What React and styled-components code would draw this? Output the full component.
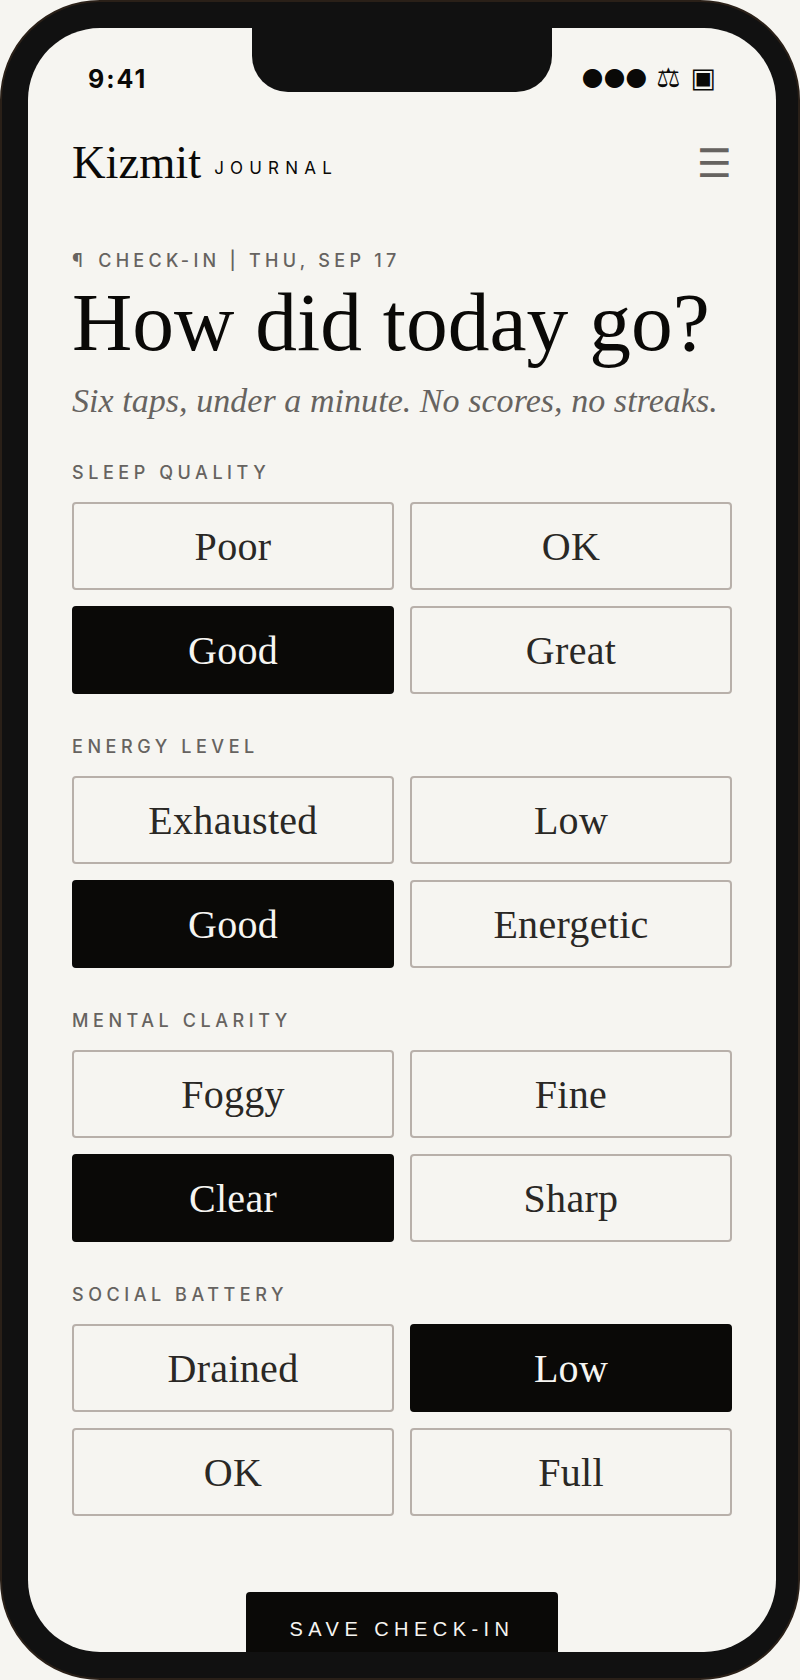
import React from 'react';
import styled, { createGlobalStyle } from 'styled-components';

const SERIF = "'Liberation Serif', 'Noto Serif', serif";
const SANS = "'Liberation Sans', Arial, sans-serif";
const WORK = "Inter, 'Liberation Sans', sans-serif";

const sections = [
  { label: 'Sleep quality', options: ['Poor', 'OK', 'Good', 'Great'], active: 'Good' },
  { label: 'Energy level', options: ['Exhausted', 'Low', 'Good', 'Energetic'], active: 'Good' },
  { label: 'Mental clarity', options: ['Foggy', 'Fine', 'Clear', 'Sharp'], active: 'Clear' },
  { label: 'Social battery', options: ['Drained', 'Low', 'OK', 'Full'], active: 'Low' },
];

const App = () => (
  <>
    <GlobalStyle />
    <Phone>
      <Screen>
        <Notch />
        <StatusBar>
          <Time>9:41</Time>
          <StatusIcons>
            <Dots>●●●</Dots>
            <Glyph>⚖</Glyph>
            <Glyph>▣</Glyph>
          </StatusIcons>
        </StatusBar>
        <Header>
          <Brand>
            <Logo>Kizmit</Logo>
            <LogoTag>Journal</LogoTag>
          </Brand>
          <Menu>☰</Menu>
        </Header>
        <Eyebrow>
          <Pilcrow>¶</Pilcrow> Check-in | Thu, Sep 17
        </Eyebrow>
        <Title>How did today go?</Title>
        <Tagline>Six taps, under a minute. No scores, no streaks.</Tagline>
        {sections.map((section) => (
          <Section key={section.label}>
            <SectionLabel>{section.label}</SectionLabel>
            <Options>
              {section.options.map((option) => (
                <Option key={option} $active={option === section.active}>
                  {option}
                </Option>
              ))}
            </Options>
          </Section>
        ))}
        <SaveButton>Save check-in</SaveButton>
      </Screen>
    </Phone>
  </>
);

export default App;

const GlobalStyle = createGlobalStyle`
  html, body {
    margin: 0;
    padding: 0;
    background: #f6f5f1;
  }
`;

const Phone = styled.div`
  width: 800px;
  height: 1680px;
  box-sizing: border-box;
  padding: 26px 22px 26px 26px;
  border: 2px solid #2a2018;
  border-radius: 100px;
  background: #111111;
  overflow: hidden;
`;

const Screen = styled.div`
  position: relative;
  height: 100%;
  box-sizing: border-box;
  padding: 0 44px;
  background: #f6f5f1;
  border-radius: 72px;
  overflow: hidden;
  color: #0a0907;
`;

const Notch = styled.div`
  position: absolute;
  top: 0;
  left: 224px;
  width: 300px;
  height: 64px;
  background: #111111;
  border-radius: 0 0 36px 36px;
`;

const StatusBar = styled.div`
  display: flex;
  justify-content: space-between;
  align-items: center;
  height: 102px;
  padding: 0 16px;
`;

const Time = styled.span`
  font-family: ${WORK};
  font-size: 25px;
  font-weight: 700;
  letter-spacing: 2px;
`;

const StatusIcons = styled.div`
  display: flex;
  align-items: center;
  gap: 10px;
  padding-bottom: 4px;
  font-family: 'DejaVu Sans', sans-serif;
  font-size: 27px;
`;

const Dots = styled.span`
  font-size: 25px;
  margin-bottom: 2px;
  margin-right: -1px;
`;

const Glyph = styled.span``;

const Header = styled.div`
  display: flex;
  justify-content: space-between;
  align-items: center;
  height: 60px;
  margin-top: 2px;
`;

const Brand = styled.div`
  display: flex;
  align-items: center;
  gap: 13px;
`;

const Logo = styled.span`
  font-family: ${SERIF};
  font-size: 46.5px;
`;

const LogoTag = styled.span`
  margin-top: 12px;
  font-family: ${WORK};
  font-size: 17px;
  letter-spacing: 6.2px;
  text-transform: uppercase;
`;

const Menu = styled.span`
  margin-top: 2px;
  font-family: 'DejaVu Sans', sans-serif;
  font-size: 39px;
  color: #666360;
`;

const Eyebrow = styled.div`
  margin-top: 58px;
  font-family: ${WORK};
  font-size: 18px;
  font-weight: 500;
  letter-spacing: 4.27px;
  text-transform: uppercase;
  color: #666360;
`;

const Pilcrow = styled.span`
  margin-right: 2px;
`;

const Title = styled.h1`
  margin: 7px 0 0;
  font-family: ${SERIF};
  font-size: 83.5px;
  font-weight: 400;
  line-height: 88px;
  white-space: nowrap;
`;

const Tagline = styled.p`
  margin: 16px 0 0;
  font-family: ${SERIF};
  font-size: 34px;
  font-style: italic;
  letter-spacing: 0.05px;
  color: #666360;
  white-space: nowrap;
`;

const Section = styled.section`
  margin-top: 42px;
`;

const SectionLabel = styled.div`
  font-family: ${WORK};
  font-size: 18px;
  font-weight: 500;
  letter-spacing: 4.55px;
  text-transform: uppercase;
  color: #666360;
  margin-bottom: 19px;
`;

const Options = styled.div`
  display: grid;
  grid-template-columns: 1fr 1fr;
  gap: 16px;
`;

const Option = styled.div`
  display: flex;
  align-items: center;
  justify-content: center;
  height: 88px;
  box-sizing: border-box;
  border: 2px solid ${(props) => (props.$active ? '#0a0907' : '#b8b0aa')};
  border-radius: 4px;
  background: ${(props) => (props.$active ? '#0a0907' : 'transparent')};
  color: ${(props) => (props.$active ? '#f6f5f1' : '#2a2825')};
  font-family: ${SERIF};
  font-size: 40px;
  letter-spacing: 0.3px;
`;

const SaveButton = styled.div`
  width: 312px;
  height: 88px;
  margin: 76px auto 0;
  padding-top: 26px;
  box-sizing: border-box;
  border-radius: 4px;
  background: #0a0907;
  color: #f6f5f1;
  font-family: ${SANS};
  font-size: 20px;
  letter-spacing: 5.45px;
  text-align: center;
  text-transform: uppercase;
`;
